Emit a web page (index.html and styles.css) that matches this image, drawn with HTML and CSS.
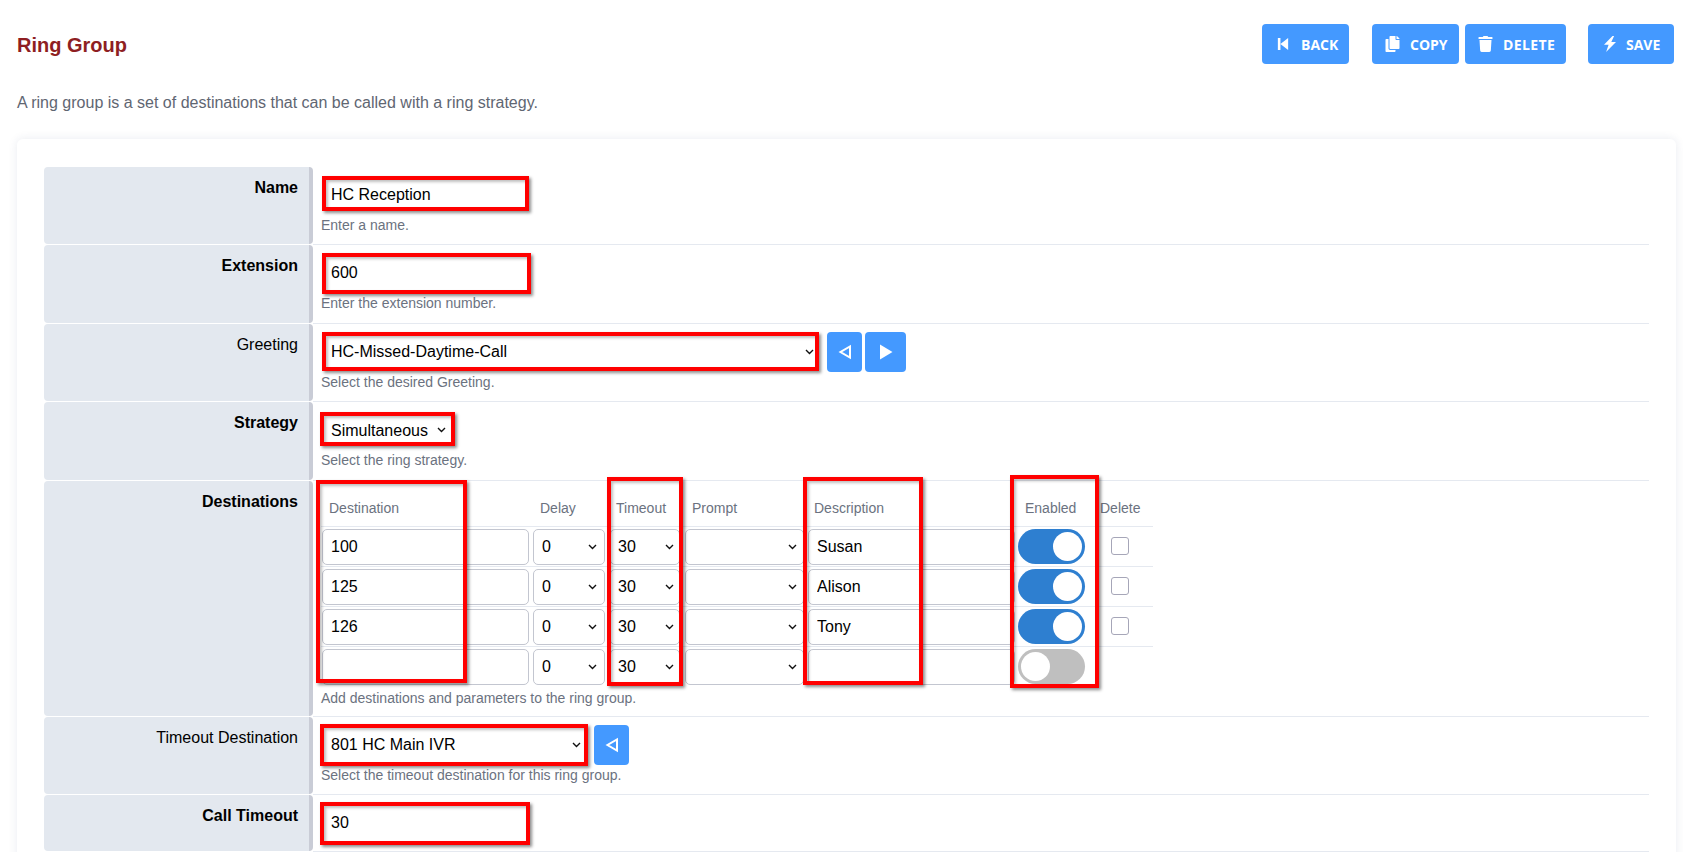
FILE: index.html
```html
<!DOCTYPE html>
<html lang="en">
<head>
<meta charset="utf-8">
<title>Ring Group</title>
<link rel="stylesheet" href="styles.css">
</head>
<body>
<div class="page">
  <header class="topbar">
    <h1 class="title">Ring Group</h1>
    <div class="actions">
      <button class="btn btn-back" type="button"><svg class="ico" viewBox="0 0 14 14"><path d="M1 0h3v14H1zM13 0v14L4 7z"/></svg>BACK</button>
      <button class="btn btn-copy" type="button"><svg class="ico ico-lg" viewBox="0 0 448 512"><path d="M320 448v40c0 13.255-10.745 24-24 24H24c-13.255 0-24-10.745-24-24V120c0-13.255 10.745-24 24-24h72v296c0 30.879 25.121 56 56 56h168zm0-344V0H152c-13.255 0-24 10.745-24 24v368c0 13.255 10.745 24 24 24h272c13.255 0 24-10.745 24-24V128H344c-13.2 0-24-10.8-24-24zm120.971-31.029L375.029 7.029A24 24 0 0 0 358.059 0H352v96h96v-6.059a24 24 0 0 0-7.029-16.97z"/></svg>COPY</button>
      <button class="btn btn-delete" type="button"><svg class="ico ico-lg" viewBox="0 0 448 512"><path d="M432 32H312l-9.4-18.7A24 24 0 0 0 281.1 0H166.8a23.72 23.72 0 0 0-21.4 13.3L136 32H16A16 16 0 0 0 0 48v32a16 16 0 0 0 16 16h416a16 16 0 0 0 16-16V48a16 16 0 0 0-16-16zM53.2 467a48 48 0 0 0 47.9 45h245.8a48 48 0 0 0 47.9-45L416 128H32z"/></svg>DELETE</button>
      <button class="btn btn-save" type="button"><svg class="ico ico-bolt" viewBox="0 0 13 16"><path d="M9 0 .5 8.8h4.6L2.6 16l9.9-10H7.8L10.6 0z"/></svg>SAVE</button>
    </div>
  </header>
  <p class="intro">A ring group is a set of destinations that can be called with a ring strategy.</p>

  <main class="card">
    <section class="row">
      <div class="label strong">Name</div>
      <div class="value">
        <div class="line"><input class="plain w-name" type="text" value="HC Reception"></div>
        <div class="hint">Enter a name.</div>
      </div>
    </section>
    <section class="row">
      <div class="label strong">Extension</div>
      <div class="value">
        <div class="line"><input class="plain w-name" type="text" value="600"></div>
        <div class="hint">Enter the extension number.</div>
      </div>
    </section>
    <section class="row">
      <div class="label">Greeting</div>
      <div class="value">
        <div class="line">
          <select class="plain w-greeting"><option>HC-Missed-Daytime-Call</option></select>
          <button class="btn-sq" type="button"><svg class="ico-sq" viewBox="0 0 14 14"><path d="M12 1.5v11L2.5 7z" fill="none" stroke="#fff" stroke-width="2"/></svg></button>
          <button class="btn-sq btn-play" type="button"><svg class="ico-sq" viewBox="0 0 14 16"><path d="M1 0.5 13.5 8 1 15.5z" fill="#fff"/></svg></button>
        </div>
        <div class="hint">Select the desired Greeting.</div>
      </div>
    </section>
    <section class="row">
      <div class="label strong">Strategy</div>
      <div class="value">
        <div class="line"><select class="plain w-strategy"><option>Simultaneous</option></select></div>
        <div class="hint">Select the ring strategy.</div>
      </div>
    </section>
    <section class="row">
      <div class="label strong">Destinations</div>
      <div class="value value-table">
        <table class="dest">
          <colgroup><col class="c1"><col class="c2"><col class="c2"><col class="c4"><col class="c5"><col class="c6"><col class="c7"></colgroup>
          <thead>
            <tr><th>Destination</th><th>Delay</th><th>Timeout</th><th>Prompt</th><th>Description</th><th class="th-en">Enabled</th><th class="th-del">Delete</th></tr>
          </thead>
          <tbody>
            <tr>
              <td><input class="field f-dest" type="text" value="100"></td>
              <td><select class="field f-delay"><option>0</option></select></td>
              <td><select class="field f-timeout"><option>30</option></select></td>
              <td><select class="field f-prompt"><option></option></select></td>
              <td><input class="field f-desc" type="text" value="Susan"></td>
              <td><span class="toggle"><span class="knob"></span></span></td>
              <td><input class="check" type="checkbox"></td>
            </tr>
            <tr>
              <td><input class="field f-dest" type="text" value="125"></td>
              <td><select class="field f-delay"><option>0</option></select></td>
              <td><select class="field f-timeout"><option>30</option></select></td>
              <td><select class="field f-prompt"><option></option></select></td>
              <td><input class="field f-desc" type="text" value="Alison"></td>
              <td><span class="toggle"><span class="knob"></span></span></td>
              <td><input class="check" type="checkbox"></td>
            </tr>
            <tr>
              <td><input class="field f-dest" type="text" value="126"></td>
              <td><select class="field f-delay"><option>0</option></select></td>
              <td><select class="field f-timeout"><option>30</option></select></td>
              <td><select class="field f-prompt"><option></option></select></td>
              <td><input class="field f-desc" type="text" value="Tony"></td>
              <td><span class="toggle"><span class="knob"></span></span></td>
              <td><input class="check" type="checkbox"></td>
            </tr>
            <tr class="last">
              <td><input class="field f-dest" type="text" value=""></td>
              <td><select class="field f-delay"><option>0</option></select></td>
              <td><select class="field f-timeout"><option>30</option></select></td>
              <td><select class="field f-prompt"><option></option></select></td>
              <td><input class="field f-desc" type="text" value=""></td>
              <td><span class="toggle off"><span class="knob"></span></span></td>
              <td></td>
            </tr>
          </tbody>
        </table>
        <div class="hint hint-table">Add destinations and parameters to the ring group.</div>
      </div>
    </section>
    <section class="row">
      <div class="label">Timeout Destination</div>
      <div class="value">
        <div class="line">
          <select class="plain w-timeout"><option>801 HC Main IVR</option></select>
          <button class="btn-sq btn-solo" type="button"><svg class="ico-sq" viewBox="0 0 14 14"><path d="M12 1.5v11L2.5 7z" fill="none" stroke="#fff" stroke-width="2"/></svg></button>
        </div>
        <div class="hint">Select the timeout destination for this ring group.</div>
      </div>
    </section>
    <section class="row row-short">
      <div class="label strong">Call Timeout</div>
      <div class="value">
        <div class="line"><input class="plain w-name" type="text" value="30"></div>
      </div>
    </section>
  </main>

  <div class="mark m-name"></div>
  <div class="mark m-ext"></div>
  <div class="mark m-greet"></div>
  <div class="mark m-strat"></div>
  <div class="mark m-dest"></div>
  <div class="mark m-timeout"></div>
  <div class="mark m-desc"></div>
  <div class="mark m-enabled"></div>
  <div class="mark m-tdest"></div>
  <div class="mark m-call"></div>
</div>
</body>
</html>
```
FILE: styles.css
```css
* { box-sizing: border-box; }
html, body { margin: 0; height: 100%; background: #fff; }
body { font-family: "Liberation Sans", Arial, sans-serif; color: #000; }

.page { position: relative; height: 852px; overflow: hidden; padding: 24px 7px 0 17px; }

.topbar { display: flex; justify-content: space-between; align-items: center; height: 40px; }
.title { margin: 2px 0 0; font-size: 20px; font-weight: 700; color: #8e1e22; }
.actions { display: flex; margin-right: 2px; }

.btn {
  display: flex; align-items: center; height: 40px; padding: 0;
  border: 0; border-radius: 4px; background: #4499ff; color: #fff;
  font-family: "Open Sans", sans-serif; font-size: 14px; font-weight: 700;
}
.btn-back { width: 87px; padding-left: 15px; }
.btn-copy { width: 87px; margin-left: 23px; padding-left: 13px; }
.btn-delete { width: 101px; margin-left: 6px; padding-left: 13px; letter-spacing: .4px; }
.btn-save { width: 86px; margin-left: 22px; padding-left: 15px; }
.ico { width: 12px; height: 14px; margin-right: 12px; fill: #fff; flex: none; }
.ico-lg { width: 15px; height: 16px; margin-right: 10px; }
.ico-bolt { width: 14px; height: 16px; margin-right: 9px; }

.intro { margin: 29px 0 0; font-size: 16px; line-height: 20px; color: #5f6672; }

.card {
  margin-top: 26px; padding: 28px 27px 40px; background: #fff; border-radius: 6px;
  box-shadow: 0 0 10px rgba(40, 60, 110, .10);
}

.row { display: grid; grid-template-columns: 269px 1fr; }
.label {
  margin-bottom: 1px; padding: 12px 11px 0 0; text-align: right;
  font-size: 16px; line-height: 18px; background: #e3e8ef;
  border-right: 4px solid #c9ccd6; border-radius: 4px;
}
.strong { font-weight: 700; }
.value { padding: 8px 8px 9.4px; border-bottom: 1px solid #e5e9f0; }
.value-table { padding: 0 8px 8px; }
.row-short .value { padding-bottom: 8px; }

.line { display: flex; align-items: center; height: 40px; }
.hint { font-size: 14px; line-height: 20px; color: #6b7280; }
.hint-table { margin-top: 2px; }

.plain {
  height: 30px; margin-left: 1px; padding: 0 0 0 9px; border: 0; background-color: #fff; outline: 0;
  font-family: inherit; font-size: 16px; color: #000;
}
.w-name { width: 205px; }
.w-greeting { width: 497px; background-position: right 5px center; }
.w-strategy { width: 131px; }
.w-timeout { width: 265px; background-position: right 6px center; }

select {
  appearance: none;
  background-image: url("data:image/svg+xml,%3Csvg xmlns='http://www.w3.org/2000/svg' width='9' height='6'%3E%3Cpath d='M1 1l3.5 3.5L8 1' fill='none' stroke='%23111' stroke-width='1.4'/%3E%3C/svg%3E");
  background-repeat: no-repeat;
  background-position: right 7px center;
  background-size: 9px 6px;
}
select.w-greeting { background-position: right 5px center; }
select.w-timeout { background-position: right 6px center; }

.btn-sq {
  display: flex; align-items: center; justify-content: center; width: 35px; height: 40px;
  margin-left: 8px; padding: 0; border: 0; border-radius: 4px; background: #4499ff;
}
.btn-play { width: 41px; margin-left: 3px; }
.btn-solo { margin-left: 7px; }
.ico-sq { width: 14px; height: 16px; }

.dest { width: 832px; table-layout: fixed; border-collapse: separate; border-spacing: 0; }
.c1 { width: 211px; }
.c2 { width: 76px; }
.c4 { width: 122px; }
.c5 { width: 210px; }
.c6 { width: 77px; }
.c7 { width: 60px; }
.dest th {
  height: 46px; padding: 0 0 8px 8px; vertical-align: bottom; text-align: left;
  font-size: 14px; line-height: 20px; font-weight: 400; color: #6b7280;
  border-bottom: 1px solid #e5e9f0; white-space: nowrap;
}
.dest .th-en { padding-left: 9px; }
.dest .th-del { padding-left: 7px; }
.dest td { height: 40px; padding: 2px 0 1px; vertical-align: top; border-bottom: 1px solid #e5e9f0; }
.dest .last td { height: 39px; border-bottom: 0; }

.field {
  display: block; height: 36px; padding: 0 0 0 8px; border: 1px solid #c3c6d0; border-radius: 5px;
  background-color: #fff; font-family: inherit; font-size: 16px; color: #000; outline: 0;
}
.f-dest { width: 207px; margin-left: 1px; }
.f-delay { width: 72px; margin-left: 1px; }
.f-timeout { width: 70px; margin-left: 2px; padding-left: 7px; background-position: right 5px center; }
.f-prompt { width: 119px; margin-left: 1px; background-position: right 6px center; }
.f-desc { width: 207px; margin-left: 2px; }

.toggle {
  display: flex; justify-content: flex-end; width: 67px; height: 35px; margin-left: 2px; padding: 3px;
  border-radius: 18px; background: #2e7fd0;
}
.toggle.off { justify-content: flex-start; background: #bfbfbf; }
.knob { width: 29px; height: 29px; border-radius: 50%; background: #fff; }

.check {
  display: block; width: 18px; height: 18px; margin: 8px 0 0 18px; appearance: none;
  border: 1px solid #a6a6b8; border-radius: 3px; background: #fff;
}

.mark {
  position: absolute; border: 4px solid #f00;
  box-shadow: 2px 2px 3px rgba(0, 0, 0, .45), inset 2px 2px 3px rgba(0, 0, 0, .25);
}
.m-name { left: 322px; top: 176px; width: 207px; height: 35px; }
.m-ext { left: 322px; top: 253px; width: 209px; height: 41px; }
.m-greet { left: 322px; top: 332px; width: 497px; height: 39px; }
.m-strat { left: 320px; top: 412px; width: 135px; height: 34px; }
.m-dest { left: 316px; top: 480px; width: 151px; height: 203px; }
.m-timeout { left: 607px; top: 477px; width: 76px; height: 209px; }
.m-desc { left: 803px; top: 477px; width: 120px; height: 208px; }
.m-enabled { left: 1010px; top: 475px; width: 89px; height: 213px; }
.m-tdest { left: 320px; top: 724px; width: 268px; height: 42px; }
.m-call { left: 320px; top: 802px; width: 210px; height: 43px; }
```
